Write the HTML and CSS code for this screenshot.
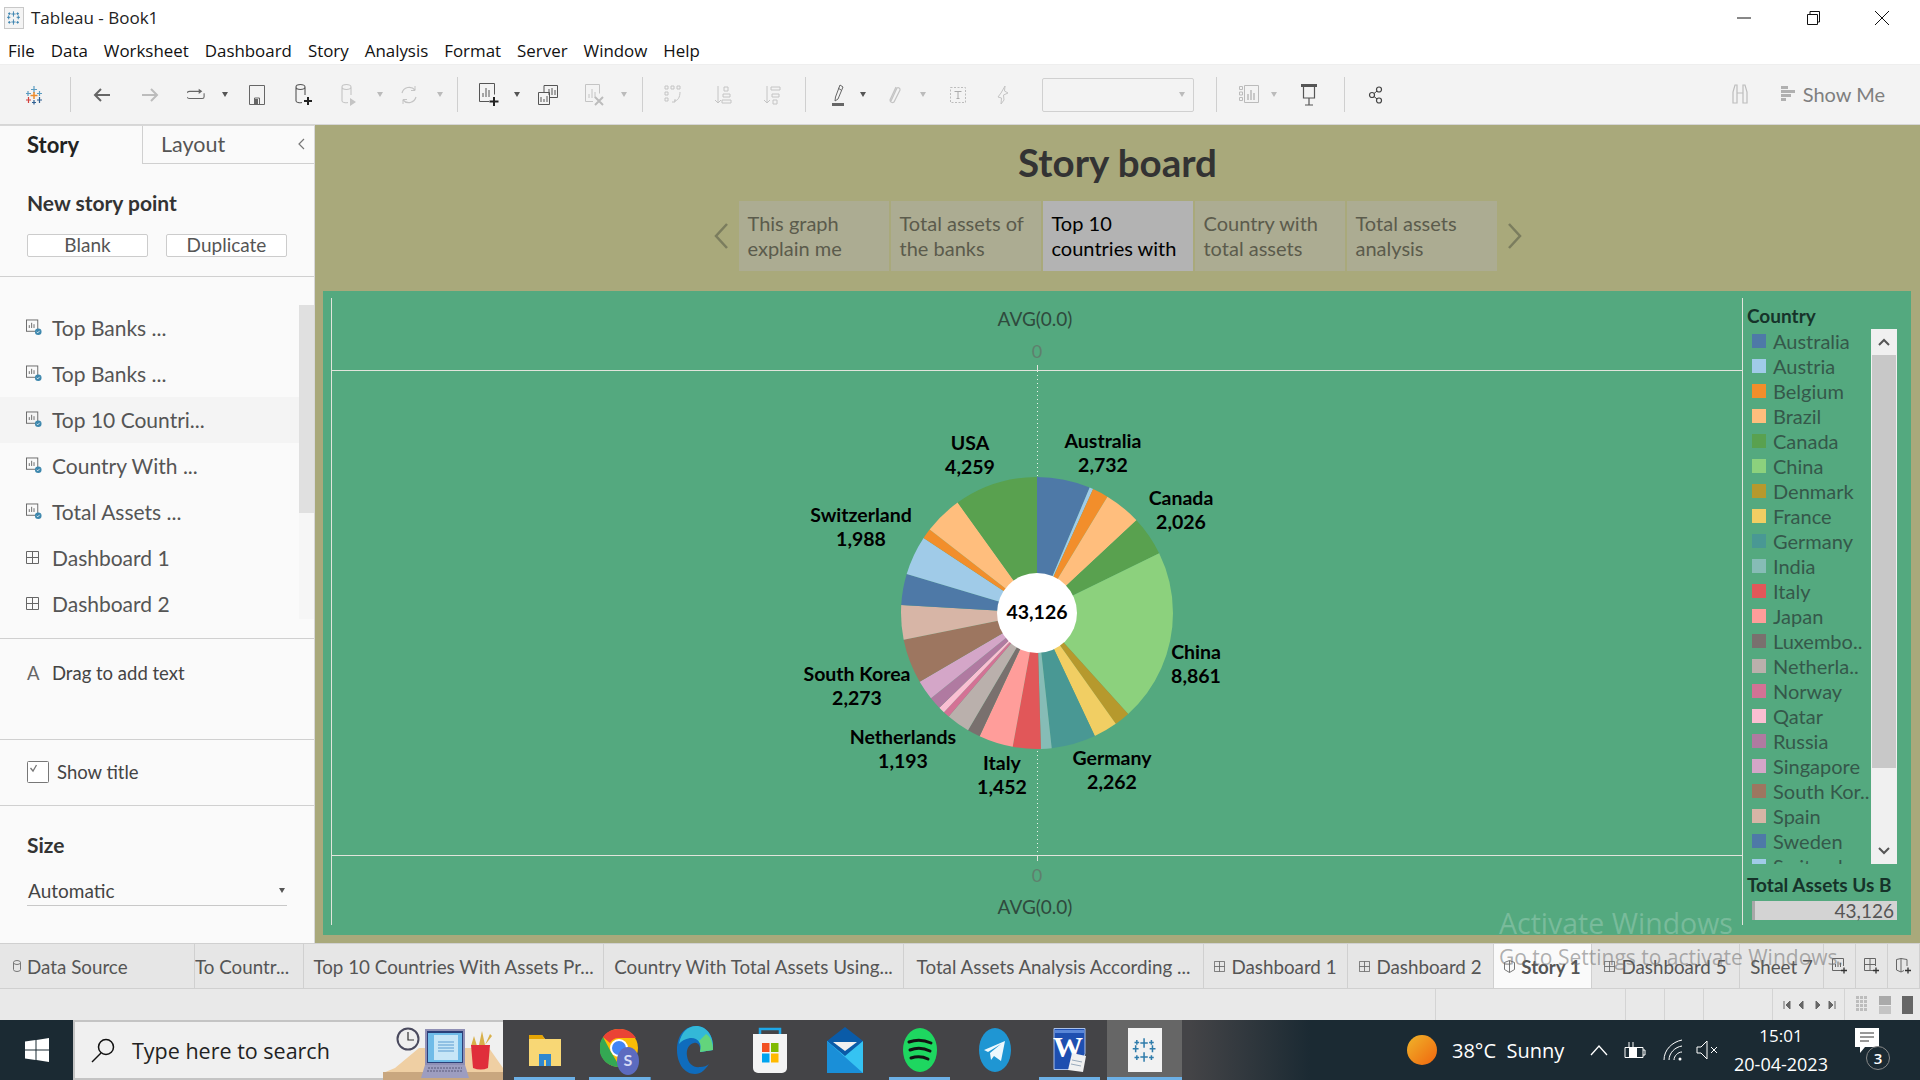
FILE: index.html
```html
<!DOCTYPE html>
<html lang="en">
<head>
<meta charset="utf-8">
<title>Tableau - Book1</title>
<link rel="stylesheet" href="styles.css">
</head>
<body>
<svg class="defs" width="0" height="0">
  <defs>
    <symbol id="logo" viewBox="0 0 24 24">
      <path d="M11.2 2v8M8 6h6.400M11.200 14v8M8 18h6.400M4 8v6M1.500 11h5M18.400 8v6M16 11h5M5 3.500v4M3 5.500h4M17.500 3.500v4M15.500 5.500h4M5 16.500v4M3 18.500h4M17.500 16.500v4M15.500 18.500h4" fill="none" stroke="currentColor" stroke-width="1.300"/>
    </symbol>
    <symbol id="sheet" viewBox="0 0 17 17">
      <rect x=".5" y=".5" width="12" height="12" fill="none" stroke="#666"/>
      <path d="M3.500 9V6M6 9V3.500M8.500 9V5" stroke="#666"/>
      <circle cx="13" cy="13" r="3.500" fill="#3d87ad"/>
      <path d="M11.300 13l1.200 1.200 2-2.200" fill="none" stroke="#fff" stroke-width=".8"/>
    </symbol>
    <symbol id="grid" viewBox="0 0 13 13">
      <path d="M.5.500h12v12H.5zM6.500.500v12M.5 6.500h12" fill="none" stroke="#666"/>
    </symbol>
  </defs>
</svg>
<div class="window">
  <header class="titlebar">
    <svg class="app-icon" width="20" height="22" viewBox="0 0 20 22"><rect x=".5" y=".5" width="19" height="21" fill="#f4f4f4" stroke="#c8c8c8"/><use href="#logo" x="2" y="3" width="16" height="16" class="blue-ink"/></svg>
    <span class="app-title">Tableau - Book1</span>
    <div class="winctl">
      <svg width="16" height="16" viewBox="0 0 16 16"><path d="M1 8h14" stroke="#111"/></svg>
      <svg width="16" height="16" viewBox="0 0 16 16"><path d="M2.500 4.500h10v10h-10zM5 4V1.500h9.500V12H13" fill="none" stroke="#111"/></svg>
      <svg width="16" height="16" viewBox="0 0 16 16"><path d="M1 1l14 14M15 1L1 15" stroke="#111"/></svg>
    </div>
  </header>
  <nav class="menubar">
    <span>File</span><span>Data</span><span>Worksheet</span><span>Dashboard</span><span>Story</span><span>Analysis</span><span>Format</span><span>Server</span><span>Window</span><span>Help</span>
  </nav>
  <div class="toolbar">
    <div class="tools">
      <div class="tool"><svg width="20" height="20" viewBox="0 0 20 20"><path d="M10 1v7M7 4.500h6M4 6v5M2 8.500h5" fill="none" stroke="#5a9bc0" stroke-width="1.200"/><path d="M10 7v7M6.500 10.500h7" stroke="#ec8a2c" stroke-width="1.500"/><path d="M15.500 6v5M13 8.500h5" stroke="#5a9bc0" stroke-width="1.200"/><path d="M4.500 12v6M2 15h5" stroke="#d2403c" stroke-width="1.200"/><path d="M15.500 12v6M13 15h5M10 15v4.500M8 17.500h4" stroke="#2e5f92" stroke-width="1.200"/></svg></div>
      <div class="tool"><span class="sep"></span></div>
      <div class="tool"><svg width="18" height="16" viewBox="0 0 18 16"><path d="M17 8H2M8 2L2 8l6 6" fill="none" stroke="#666" stroke-width="2"/></svg></div>
      <div class="tool"><svg width="18" height="16" viewBox="0 0 18 16"><path d="M1 8h15M10 2l6 6-6 6" fill="none" stroke="#bcbcbc" stroke-width="2"/></svg></div>
      <div class="tool"><svg width="18" height="13" viewBox="0 0 20 14"><path d="M15 3.500H3a2.500 2.500 0 0 0 0 8h14a2 2 0 0 0 2-2v-4" fill="none" stroke="#666" stroke-width="1.200"/><path d="M13 .5l4 3-4 3z" fill="#666"/></svg></div>
      <div class="tool"><i class="caret"></i></div>
      <div class="tool"><svg width="16" height="20" viewBox="0 0 16 20"><path d="M.5.500h15v19H.5zM5.500 19v-6h5v6" fill="none" stroke="#666"/><rect x="5" y="14" width="4" height="5" fill="#666"/></svg></div>
      <div class="tool"><svg width="18" height="24" viewBox="0 0 18 24"><path d="M1 4v14a4 2 0 0 0 6 1.500M1 4a4.500 2.500 0 0 1 9 0v8M1 4a4.500 2.500 0 0 0 9 0" fill="none" stroke="#555" stroke-width="1.100"/><path d="M13 14v8M9 18h8" stroke="#222" stroke-width="2"/></svg></div>
      <div class="tool"><svg width="18" height="24" viewBox="0 0 18 24"><path d="M1 4v14a4 2 0 0 0 6 1.500M1 4a4.500 2.500 0 0 1 9 0v8M1 4a4.500 2.500 0 0 0 9 0" fill="none" stroke="#c4c4c4" stroke-width="1.100"/><path d="M9 15l6 4-6 4z" fill="#c4c4c4"/></svg></div>
      <div class="tool"><i class="caret off"></i></div>
      <div class="tool"><svg width="18" height="20" viewBox="0 0 18 20"><path d="M2 8a7.500 7.500 0 0 1 13-3M16 12a7.500 7.500 0 0 1-13 3" fill="none" stroke="#c4c4c4" stroke-width="1.200"/><path d="M15 1v4.500h-4M3 19v-4.500h4" fill="none" stroke="#c4c4c4"/></svg></div>
      <div class="tool"><i class="caret off"></i></div>
      <div class="tool"><span class="sep"></span></div>
      <div class="tool"><svg width="20" height="24" viewBox="0 0 20 24"><path d="M10 18.500H.5V.5h15v11" fill="none" stroke="#555"/><path d="M4 14v-4M7 14V5M10 14V7" stroke="#555"/><path d="M15 14v9M10.500 18.500h9" stroke="#222" stroke-width="2"/></svg></div>
      <div class="tool"><i class="caret"></i></div>
      <div class="tool"><svg width="20" height="20" viewBox="0 0 20 20"><path d="M.5 7.500h11v12H.5zM6 7V.5h13.500v12H12" fill="none" stroke="#555"/><path d="M3 17v-5M6 17v-3M9 17v-6M11 10V4M14 10V3M17 10V5" stroke="#555"/></svg></div>
      <div class="tool"><svg width="20" height="22" viewBox="0 0 20 22"><path d="M8 17.500H.5V.5h14v9" fill="none" stroke="#c4c4c4"/><path d="M4 14v-4M7 14V5M10 14V8" stroke="#c4c4c4"/><path d="M10 13l8 8M18 13l-8 8" stroke="#bcbcbc" stroke-width="2"/></svg></div>
      <div class="tool"><i class="caret off"></i></div>
      <div class="tool"><span class="sep"></span></div>
      <div class="tool"><svg width="18" height="20" viewBox="0 0 18 20"><path d="M1 1h3v3H1zM7 1h3v3H7zM13 1h3v3h-3zM1 7h3v3H1zM1 13h3v3H1zM8 17h3v-3M16 7c0 5-2 9-6 9" fill="none" stroke="#c4c4c4"/></svg></div>
      <div class="tool"><svg width="18" height="20" viewBox="0 0 18 20"><path d="M4 1v17M1 15l3 3 3-3" fill="none" stroke="#c4c4c4"/><path d="M10 2h4v4h-4zM9 9h7v3H9zM8 15h9v3H8z" fill="none" stroke="#c4c4c4"/></svg></div>
      <div class="tool"><svg width="18" height="20" viewBox="0 0 18 20"><path d="M4 1v17M1 15l3 3 3-3" fill="none" stroke="#c4c4c4"/><path d="M8 2h9v3H8zM9 9h7v3H9zM10 15h4v4h-4z" fill="none" stroke="#c4c4c4"/></svg></div>
      <div class="tool"><span class="sep"></span></div>
      <div class="tool"><svg width="12" height="22" viewBox="0 0 12 22"><path d="M8 1l3 2-5 12-3 2 .5-4zM6 4l3 2" fill="none" stroke="#666"/><rect y="19" width="12" height="3" fill="#666"/></svg></div>
      <div class="tool"><i class="caret"></i></div>
      <div class="tool"><svg width="14" height="20" viewBox="0 0 14 20"><path d="M3 16L9 3a2 2 0 0 1 3 2L6 17a2.500 2.500 0 0 1-4-2L8 2" fill="none" stroke="#c4c4c4" stroke-width="1.200"/></svg></div>
      <div class="tool"><i class="caret off"></i></div>
      <div class="tool"><svg width="16" height="16" viewBox="0 0 16 16"><rect x=".5" y=".5" width="15" height="15" fill="none" stroke="#bcbcbc" stroke-dasharray="2 1.500"/><path d="M4.500 4.500h7M8 4.500v7M6.500 11.500h3" fill="none" stroke="#aaa"/></svg></div>
      <div class="tool"><svg width="12" height="20" viewBox="0 0 12 20"><path d="M8 1l-.5 5L11 8 6.500 10 7 15l-3 4 .5-6L1 12l3-4z" fill="none" stroke="#c4c4c4"/></svg></div>
      <div class="tool"><div class="combo"><i class="caret off"></i></div></div>
      <div class="tool"><span class="sep"></span></div>
      <div class="tool"><svg width="20" height="20" viewBox="0 0 20 20"><path d="M.5 1.500h3v3h-3zM.5 7h3v3h-3zM.5 12.500h3v3h-3zM5.500.5h14v17h-14z" fill="none" stroke="#bbb"/><path d="M9 15V9M12 15V5M15 15V8" stroke="#bbb" stroke-width="1.500"/></svg></div>
      <div class="tool"><i class="caret off"></i></div>
      <div class="tool"><svg width="16" height="22" viewBox="0 0 16 22"><path d="M2.500 2h11v12h-11zM8 14v7M4 21h8" fill="none" stroke="#555" stroke-width="1.200"/><rect y="0" width="16" height="3" fill="#555"/></svg></div>
      <div class="tool"><span class="sep"></span></div>
      <div class="tool"><svg width="16" height="18" viewBox="0 0 16 18"><circle cx="11" cy="3.500" r="2.500" fill="none" stroke="#444" stroke-width="1.200"/><circle cx="4" cy="9" r="2.500" fill="none" stroke="#444" stroke-width="1.200"/><circle cx="11" cy="14.500" r="2.500" fill="none" stroke="#444" stroke-width="1.200"/><path d="M6 7.500l3-2.400M6 10.500l3 2.400" stroke="#444"/></svg></div>
    </div>
    <div class="showme">
      <svg width="18" height="20" viewBox="0 0 18 20"><path d="M2 19V8l2-7h2v18zM16 19V8l-2-7h-2v18zM6 9h6" fill="none" stroke="#bdbdbd" stroke-width="1.200"/></svg>
      <svg class="showme-icon" width="14" height="15" viewBox="0 0 14 15"><path d="M0 0h7v3H0zM0 4h14v3H0zM0 8h10v3H0zM0 12h5v3H0z" fill="#b0b0b0"/></svg>
      <span>Show Me</span>
    </div>
  </div>

  <main class="main">
    <aside class="sidebar">
      <div class="side-tabs">
        <div class="side-tab active">Story</div>
        <div class="side-tab">Layout<svg class="collapse" width="7" height="12" viewBox="0 0 7 12"><path d="M6 1L1 6l5 5" fill="none" stroke="#777" stroke-width="1.200"/></svg></div>
      </div>
      <section class="new-point">
        <h2 class="side-h">New story point</h2>
        <div class="btns"><button class="btn">Blank</button><button class="btn">Duplicate</button></div>
      </section>
      <section class="sheets">
        <ul class="sheet-list">
          <li><svg width="16" height="17"><use href="#sheet"/></svg>Top Banks ...</li>
          <li><svg width="16" height="17"><use href="#sheet"/></svg>Top Banks ...</li>
          <li class="hi"><svg width="16" height="17"><use href="#sheet"/></svg>Top 10 Countri...</li>
          <li><svg width="16" height="17"><use href="#sheet"/></svg>Country With ...</li>
          <li><svg width="16" height="17"><use href="#sheet"/></svg>Total Assets ...</li>
          <li><svg width="16" height="13"><use href="#grid" width="13" height="13"/></svg>Dashboard 1</li>
          <li><svg width="16" height="13"><use href="#grid" width="13" height="13"/></svg>Dashboard 2</li>
        </ul>
        <div class="side-scroll"><div class="side-thumb"></div></div>
      </section>
      <section class="dragtext"><span class="a-glyph">A</span><span>Drag to add text</span></section>
      <section class="showtitle">
        <svg width="22" height="22" viewBox="0 0 22 22"><rect x=".5" y=".5" width="21" height="21" rx="1" fill="#fff" stroke="#777"/><path d="M3.500 7l2.500 3 3.500-6" fill="none" stroke="#777" stroke-width="1.300"/></svg>
        <span>Show title</span>
      </section>
      <section class="size">
        <h2 class="side-h">Size</h2>
        <div class="select"><span>Automatic</span><i class="caret"></i></div>
      </section>
    </aside>

    <div class="story">
      <div class="story-title">Story board</div>
      <div class="points">
        <svg width="16" height="26" viewBox="0 0 16 26"><path d="M14 1L3 13l11 12" fill="none" stroke="#7b7d5e" stroke-width="2.500"/></svg>
        <div class="point-tabs">
          <div class="point">This graph<br>explain me</div>
          <div class="point">Total assets of<br>the banks</div>
          <div class="point current">Top 10<br>countries with</div>
          <div class="point">Country with<br>total assets</div>
          <div class="point">Total assets<br>analysis</div>
        </div>
        <svg width="16" height="26" viewBox="0 0 16 26"><path d="M2 1l11 12L2 25" fill="none" stroke="#7b7d5e" stroke-width="2.500"/></svg>
      </div>
      <div class="viz">
        <svg class="plot" width="1420" height="644" viewBox="0 0 1420 644">
          <path class="axis" d="M8.500 7v627M1419.500 7v627M9 79.500h1410M9 564.500h1410M714.500 74v5M714.500 565v5"/>
          <path class="dots" d="M714.500 80v484"/>
          <text class="axis-title" x="712" y="35">AVG(0.0)</text>
          <text class="axis-num" x="714" y="67">0</text>
          <text class="axis-num" x="714" y="591">0</text>
          <text class="axis-title" x="712" y="623">AVG(0.0)</text>
          <g transform="translate(0 1)">
            <g class="pie" transform="rotate(-90 714 321)">
              <circle class="blue" cx="714" cy="321" r="68" pathLength="360" stroke-dasharray="22.8 360" stroke-dashoffset="0"/>
              <circle class="sky" cx="714" cy="321" r="68" pathLength="360" stroke-dasharray="1.600 360" stroke-dashoffset="-22.8"/>
              <circle class="orange" cx="714" cy="321" r="68" pathLength="360" stroke-dasharray="6.800 360" stroke-dashoffset="-24.4"/>
              <circle class="peach" cx="714" cy="321" r="68" pathLength="360" stroke-dasharray="15.800 360" stroke-dashoffset="-31.2"/>
              <circle class="green" cx="714" cy="321" r="68" pathLength="360" stroke-dasharray="16.900 360" stroke-dashoffset="-47"/>
              <circle class="lime" cx="714" cy="321" r="68" pathLength="360" stroke-dasharray="74 360" stroke-dashoffset="-63.9"/>
              <circle class="olive" cx="714" cy="321" r="68" pathLength="360" stroke-dasharray="6.700 360" stroke-dashoffset="-137.9"/>
              <circle class="yellow" cx="714" cy="321" r="68" pathLength="360" stroke-dasharray="10.200 360" stroke-dashoffset="-144.6"/>
              <circle class="teal" cx="714" cy="321" r="68" pathLength="360" stroke-dasharray="18.900 360" stroke-dashoffset="-154.8"/>
              <circle class="mint" cx="714" cy="321" r="68" pathLength="360" stroke-dasharray="4.600 360" stroke-dashoffset="-173.7"/>
              <circle class="red" cx="714" cy="321" r="68" pathLength="360" stroke-dasharray="12 360" stroke-dashoffset="-178.3"/>
              <circle class="salmon" cx="714" cy="321" r="68" pathLength="360" stroke-dasharray="14.700 360" stroke-dashoffset="-190.3"/>
              <circle class="grey" cx="714" cy="321" r="68" pathLength="360" stroke-dasharray="5.500 360" stroke-dashoffset="-205"/>
              <circle class="stone" cx="714" cy="321" r="68" pathLength="360" stroke-dasharray="10 360" stroke-dashoffset="-210.5"/>
              <circle class="rose" cx="714" cy="321" r="68" pathLength="360" stroke-dasharray="2.700 360" stroke-dashoffset="-220.5"/>
              <circle class="pink" cx="714" cy="321" r="68" pathLength="360" stroke-dasharray="2.700 360" stroke-dashoffset="-223.2"/>
              <circle class="mauve" cx="714" cy="321" r="68" pathLength="360" stroke-dasharray="5.300 360" stroke-dashoffset="-225.9"/>
              <circle class="lilac" cx="714" cy="321" r="68" pathLength="360" stroke-dasharray="8.400 360" stroke-dashoffset="-231.2"/>
              <circle class="brown" cx="714" cy="321" r="68" pathLength="360" stroke-dasharray="19 360" stroke-dashoffset="-239.6"/>
              <circle class="tan" cx="714" cy="321" r="68" pathLength="360" stroke-dasharray="14.900 360" stroke-dashoffset="-258.6"/>
              <circle class="blue" cx="714" cy="321" r="68" pathLength="360" stroke-dasharray="13.200 360" stroke-dashoffset="-273.5"/>
              <circle class="sky" cx="714" cy="321" r="68" pathLength="360" stroke-dasharray="16.800 360" stroke-dashoffset="-286.7"/>
              <circle class="orange" cx="714" cy="321" r="68" pathLength="360" stroke-dasharray="4.400 360" stroke-dashoffset="-303.5"/>
              <circle class="peach" cx="714" cy="321" r="68" pathLength="360" stroke-dasharray="16.400 360" stroke-dashoffset="-307.9"/>
              <circle class="green" cx="714" cy="321" r="68" pathLength="360" stroke-dasharray="35.700 360" stroke-dashoffset="-324.3"/>
            </g>
            <circle class="hole" cx="714" cy="321" r="40"/>
            <text class="lbl" x="714" y="327">43,126</text>
            <text class="lbl" x="647" y="158">USA</text><text class="lbl" x="647" y="182">4,259</text>
            <text class="lbl" x="780" y="156">Australia</text><text class="lbl" x="780" y="180">2,732</text>
            <text class="lbl" x="858" y="213">Canada</text><text class="lbl" x="858" y="237">2,026</text>
            <text class="lbl" x="873" y="367">China</text><text class="lbl" x="873" y="391">8,861</text>
            <text class="lbl" x="789" y="473">Germany</text><text class="lbl" x="789" y="497">2,262</text>
            <text class="lbl" x="679" y="478">Italy</text><text class="lbl" x="679" y="502">1,452</text>
            <text class="lbl" x="580" y="452">Netherlands</text><text class="lbl" x="580" y="476">1,193</text>
            <text class="lbl" x="534" y="389">South Korea</text><text class="lbl" x="534" y="413">2,273</text>
            <text class="lbl" x="538" y="230">Switzerland</text><text class="lbl" x="538" y="254">1,988</text>
          </g>
        </svg>
        <div class="legend">
          <div class="legend-title">Country</div>
          <div class="legend-body">
            <ul class="legend-list">
              <li><i class="blue"></i>Australia</li>
              <li><i class="sky"></i>Austria</li>
              <li><i class="orange"></i>Belgium</li>
              <li><i class="peach"></i>Brazil</li>
              <li><i class="green"></i>Canada</li>
              <li><i class="lime"></i>China</li>
              <li><i class="olive"></i>Denmark</li>
              <li><i class="yellow"></i>France</li>
              <li><i class="teal"></i>Germany</li>
              <li><i class="mint"></i>India</li>
              <li><i class="red"></i>Italy</li>
              <li><i class="salmon"></i>Japan</li>
              <li><i class="grey"></i>Luxembo..</li>
              <li><i class="stone"></i>Netherla..</li>
              <li><i class="rose"></i>Norway</li>
              <li><i class="pink"></i>Qatar</li>
              <li><i class="mauve"></i>Russia</li>
              <li><i class="lilac"></i>Singapore</li>
              <li><i class="brown"></i>South Kor..</li>
              <li><i class="tan"></i>Spain</li>
              <li><i class="blue"></i>Sweden</li>
              <li><i class="sky"></i>Switzerland</li>
            </ul>
            <div class="legend-scroll">
              <svg width="14" height="10" viewBox="0 0 14 10"><path d="M2 8l5-5 5 5" fill="none" stroke="#555" stroke-width="2"/></svg>
              <div class="legend-thumb"></div>
              <svg width="14" height="10" viewBox="0 0 14 10"><path d="M2 2l5 5 5-5" fill="none" stroke="#555" stroke-width="2"/></svg>
            </div>
          </div>
          <div class="legend-title total">Total Assets Us B</div>
          <div class="total-bar"><span>43,126</span></div>
        </div>
      </div>
    </div>
  </main>

  <div class="tabs">
    <div class="tab"><svg width="8" height="12" viewBox="0 0 8 12"><path d="M.5 2.500a3.500 2 0 0 1 7 0v7a3.500 2 0 0 1-7 0zM.5 2.500a3.500 2 0 0 0 7 0" fill="none" stroke="#777"/></svg>Data Source</div>
    <div class="tab clip">To Countr...</div>
    <div class="tab">Top 10 Countries With Assets Pr...</div>
    <div class="tab">Country With Total Assets Using...</div>
    <div class="tab">Total Assets Analysis According ...</div>
    <div class="tab"><svg width="11" height="11"><use href="#grid" width="11" height="11"/></svg>Dashboard 1</div>
    <div class="tab"><svg width="11" height="11"><use href="#grid" width="11" height="11"/></svg>Dashboard 2</div>
    <div class="tab on"><svg width="11" height="13" viewBox="0 0 11 13"><path d="M.5 2.500l5-2 5 2v7l-5 3-5-3zM5.500.5v12" fill="none" stroke="#777"/></svg>Story 1</div>
    <div class="tab"><svg width="11" height="11"><use href="#grid" width="11" height="11"/></svg>Dashboard 5</div>
    <div class="tab">Sheet 7</div>
    <div class="tab"><svg width="16" height="16" viewBox="0 0 16 16"><path d="M9 12.500H.5V.5h11V8M3.500 9V6M6 9V3.500M8.500 9V5" fill="none" stroke="#666"/><path d="M12 9.500v6M9 12.500h6" stroke="#333" stroke-width="1.300"/></svg></div>
    <div class="tab"><svg width="16" height="16" viewBox="0 0 16 16"><path d="M9 12.500H.5V.5h11V8M.5 6.500h11M6 .5v12" fill="none" stroke="#666"/><path d="M12 9.500v6M9 12.500h6" stroke="#333" stroke-width="1.300"/></svg></div>
    <div class="tab"><svg width="16" height="16" viewBox="0 0 16 16"><path d="M8 12.500l-3 1.500-4.500-2V1.500L5 .5l6 1V8M5 .5V14" fill="none" stroke="#666"/><path d="M12 9.500v6M9 12.500h6" stroke="#333" stroke-width="1.300"/></svg></div>
  </div>

  <div class="status">
    <div class="cell"></div>
    <div class="cell"></div>
    <div class="cell"></div>
    <div class="cell"></div>
    <div class="cell"></div>
    <div class="cell nav step">
      <svg width="60" height="10" viewBox="0 0 60 10"><path d="M1 1v8M7 1L3 5l4 4zM20 1l-4 4 4 4zM33 1l4 4-4 4zM46 1l4 4-4 4zM52 1v8" fill="#666" stroke="#666"/></svg>
    </div>
    <div class="cell nav view">
      <svg width="60" height="20" viewBox="0 0 60 20"><path d="M1 1h11v18H1z" fill="none"/><path d="M1 1h3v3H1zM5 1h3v3H5zM9 1h3v3H9zM1 5h3v3H1zM5 5h3v3H5zM9 5h3v3H9zM1 9h3v3H1zM5 9h3v3H5zM9 9h3v3H9zM1 13h3v3H1zM5 13h3v3H5zM9 13h3v3H9z" fill="#bdbdbd"/><path d="M24 1h12v9H24z" fill="#aaa"/><path d="M24 11h12v8H24z" fill="#c4c4c4"/><rect x="47" y="1" width="11" height="18" fill="#666"/></svg>
    </div>
  </div>

  <footer class="taskbar">
    <div class="start"><svg width="24" height="24" viewBox="0 0 24 24"><path d="M0 3.500l10.500-1.500v9.500H0zM11.500 2L24 0v11.500H11.500zM0 12.500h10.500V22L0 20.500zM11.500 12.500H24V24l-12.500-2z" fill="#fff"/></svg></div>
    <div class="search">
      <svg width="26" height="26" viewBox="0 0 26 26"><circle cx="16" cy="10" r="7.500" fill="none" stroke="#111" stroke-width="1.500"/><path d="M11 16L2 25" stroke="#111" stroke-width="1.500"/></svg>
      <span class="search-text">Type here to search</span>
      <svg class="desk" width="120" height="60" viewBox="0 0 120 60">
        <path d="M12 48l24-20h70l14 20v12H0V53z" fill="#efcfa3"/><path d="M0 52h120v8H0z" fill="#c9a77f"/>
        <circle cx="25" cy="19" r="10.500" fill="#eee" stroke="#4a4a5e" stroke-width="2"/><path d="M25 12v8h6" fill="none" stroke="#333" stroke-width="1.200"/>
        <path d="M42 9h40v36H42z" fill="#8f8fb5"/><rect x="44" y="11" width="36" height="32" fill="#2b3f78"/><rect x="45" y="13" width="34" height="29" fill="#6fbbe8"/><rect x="51" y="15" width="24" height="25" fill="#c7e6f7"/><path d="M55 22h16M55 25h16M55 28h16M55 31h16" stroke="#5a9bd0"/>
        <path d="M42 45h40l4 13H38z" fill="#9d9dc0"/><path d="M45 48h34M44 51h36" stroke="#5b5b7a" stroke-dasharray="2 1"/>
        <path d="M88 26l3-10 3 10zM96 25l3-14 3 14zM102 25l5-11 2 2z" fill="#d8b04a"/><path d="M88 25h19l-2 23q-7 3-15 0z" fill="#e02e3b"/>
      </svg>
    </div>
    <div class="apps">
      <div class="app run">
        <svg width="34" height="36" viewBox="0 0 34 36"><path d="M1 3h13l3 4h16v27H1z" fill="#f8d775"/><path d="M1 3h13l3 4H1z" fill="#e5a505"/><path d="M11 34V22h12v12h-5v-6h-2v6z" fill="#2f88d0"/></svg>
      </div>
      <div class="app run two">
        <svg width="40" height="52" viewBox="0 0 40 52"><circle cx="19" cy="24" r="19" fill="#fbbc05"/><path d="M19 5A19 19 0 0 1 36 14H19a10 10 0 0 0-9 5L3 13A19 19 0 0 1 19 5z" fill="#ea4335"/><path d="M3 13l8 15 9 15A19 19 0 0 1 3 13z" fill="#34a853"/><circle cx="19" cy="24" r="9" fill="#fff"/><circle cx="19" cy="24" r="7" fill="#4285f4"/><ellipse cx="28" cy="37" rx="11" ry="14" fill="#5c6bc0"/><text class="s-mark" x="28" y="42">S</text></svg>
      </div>
      <div class="app">
        <svg width="38" height="48" viewBox="0 0 38 48"><path d="M1 24C1 9 9 0 20 0c11 0 18 10 17 24l-13 2c1-6-2-10-6-9-5 1-8 6-7 13 1 8 7 12 13 11 4 0 7-1 9-3-4 6-8 10-14 10C8 48 1 37 1 24z" fill="#0f6cbd"/><path d="M3 18C5 6 12 0 20 0c11 0 18 10 17 24l-13 2c3-9-3-15-10-14-5 1-9 3-11 6z" fill="#33b8d8"/><path d="M30 8c5 3 7 9 7 16l-13 2c1-5 1-8-1-11z" fill="#63d47c"/></svg>
      </div>
      <div class="app">
        <svg width="36" height="46" viewBox="0 0 36 46"><path d="M8 8V2h20v6" fill="none" stroke="#1ea7e8" stroke-width="2.500"/><path d="M1 7h34v34a5 5 0 0 1-5 5H6a5 5 0 0 1-5-5z" fill="#f4f4f4"/><rect x="10" y="16" width="7.500" height="9" fill="#f25022"/><rect x="19" y="16" width="7.500" height="9" fill="#7fba00"/><rect x="10" y="26.500" width="7.500" height="9" fill="#00a4ef"/><rect x="19" y="26.500" width="7.500" height="9" fill="#ffb900"/></svg>
      </div>
      <div class="app">
        <svg width="36" height="46" viewBox="0 0 36 46"><path d="M0 14L18 0l18 14v32H0z" fill="#0a5ba8"/><path d="M6 15h24l-12 9z" fill="#f0f0f0"/><path d="M0 14l18 15 18-15v32H0z" fill="#35c3f2"/><path d="M0 14v32h36z" fill="#1a8fd8"/></svg>
      </div>
      <div class="app run">
        <svg width="34" height="44" viewBox="0 0 34 44"><ellipse cx="17" cy="22" rx="17" ry="22" fill="#1ed760"/><path d="M6 14q11-4 22 1M7 22q10-4 20 1M8 30q9-3 17 1" fill="none" stroke="#121212" stroke-width="3" stroke-linecap="round"/></svg>
      </div>
      <div class="app">
        <svg width="32" height="44" viewBox="0 0 32 44"><ellipse cx="16" cy="22" rx="16" ry="22" fill="#1f96d3"/><path d="M5 22l21-9-4 20-7-5-3 4-1-7 11-9-13 8z" fill="#eef8fd"/></svg>
      </div>
      <div class="app run">
        <svg width="34" height="44" viewBox="0 0 34 44"><path d="M1 .5h31v25l-5 16H1z" fill="#1e4fb0" stroke="#a8c0ea"/><path d="M2 2h29v3H2z" fill="#5a87d8"/><text class="w-mark" x="15" y="29">W</text><path d="M15 42l4-17 14 3-3 16z" fill="#f0f0f0"/><path d="M19 32l10 2M18 36l10 2" stroke="#9ab"/></svg>
      </div>
      <div class="app run full">
        <svg width="34" height="44" viewBox="0 0 34 44"><rect width="34" height="44" fill="#f2f2f2"/><use href="#logo" x="3" y="7" width="28" height="30" class="blue-ink"/></svg>
      </div>
    </div>
    <div class="tray">
      <i class="sun"></i>
      <span class="weather">38°C&nbsp; Sunny</span>
      <svg class="t-caret" width="18" height="12" viewBox="0 0 18 12"><path d="M1 11l8-9 8 9" fill="none" stroke="#fff" stroke-width="1.300"/></svg>
      <svg class="t-batt" width="22" height="18" viewBox="0 0 22 18"><path d="M1 6.500h18v10H1zM19 9h2v5h-2M5 6V1M9 6V1" fill="none" stroke="#fff"/><path d="M5 7h8v9H5z" fill="#fff"/></svg>
      <svg class="t-wifi" width="20" height="22" viewBox="0 0 20 22"><path d="M1 21C1 11 9 3 19 1M6 21c0-7 6-13 13-14M11 21c0-4 4-8 8-8" fill="none" stroke="#fff"/><circle cx="17" cy="20" r="1.500" fill="#fff"/></svg>
      <svg class="t-spk" width="22" height="22" viewBox="0 0 22 22"><path d="M1 8h4l6-6v18l-6-6H1zM15 8l6 6M21 8l-6 6" fill="none" stroke="#fff"/></svg>
      <div class="clock"><span class="time">15:01</span><span class="date">20-04-2023</span></div>
      <div class="notif">
        <svg width="24" height="30" viewBox="0 0 24 30"><path d="M0 0h24v19H10l-5 6v-6H0z" fill="#fff"/><path d="M5 5h14M5 9h14M5 13h9" stroke="#333"/></svg>
        <span class="badge">3</span>
      </div>
    </div>
  </footer>

  <div class="watermark">
    <span class="wm-1">Activate Windows</span>
    <span class="wm-2">Go to Settings to activate Windows.</span>
  </div>
</div>
</body>
</html>
```

FILE: styles.css
```css
* { box-sizing: border-box; }
html, body { margin: 0; padding: 0; height: 100%; overflow: hidden; }
body { font-family: "Lato", "Liberation Sans", sans-serif; color: #444; background: #fff; }
.defs { position: absolute; }
.window { position: relative; width: 1920px; height: 1080px; display: flex; flex-direction: column; }
.blue-ink { color: #2f7cab; }

.titlebar { height: 37px; flex: none; display: flex; align-items: center; padding: 0 0 2px 4px; font-family: "Open Sans", sans-serif; font-size: 17px; color: #222; }
.app-icon { margin-right: 7px; }
.winctl { margin-left: auto; display: flex; gap: 53px; padding-right: 30px; }

.menubar { height: 27px; flex: none; display: flex; align-items: center; gap: 16px; padding-left: 8px; font-family: "Open Sans", sans-serif; font-size: 16.9px; color: #111; }

.toolbar { height: 61px; flex: none; display: flex; align-items: center; background: #f3f3f3; border-top: 1px solid #eee; border-bottom: 1px solid #d6d6d6; }
.tools { display: grid; padding-left: 34px; grid-template-columns: 36px 32px 48px 46px 29px 32px 47px 46px 30px 29px 31px 17px 32px 28px 31px 47px 29px 18px 31px 50px 49px 33px 33px 25px 32px 28px 35px 45px 115px 98px 33px 25px 35px 35px 32px 0; align-items: center; }
.tool { width: 0; display: flex; justify-content: center; align-items: center; }
.tool svg, .tool .sep, .tool .caret, .tool .combo { flex: none; }
.sep { display: block; width: 1px; height: 35px; background: #cfcfcf; }
.caret { display: block; width: 0; height: 0; border-left: 3.5px solid transparent; border-right: 3.5px solid transparent; border-top: 5px solid #555; }
.caret.off { border-top-color: #bbb; }
.combo { width: 152px; height: 34px; border: 1px solid #d0d0d0; border-radius: 2px; display: flex; align-items: center; justify-content: flex-end; padding-right: 8px; }
.showme { margin-left: auto; display: flex; align-items: center; padding: 0 35px 2px 0; font-size: 20px; color: #7f7f7f; }
.showme-icon { margin-left: 32px; margin-right: 8px; }

.main { flex: 1; display: flex; min-height: 0; }
.sidebar { width: 315px; flex: none; display: flex; flex-direction: column; background: #fafafa; border-right: 1px solid #d8d8d8; font-size: 18.5px; color: #444; }
.side-tabs { height: 39px; flex: none; display: flex; border-top: 1px solid #d8d8d8; }
.side-tab { display: flex; align-items: center; padding-bottom: 2px; }
.side-tab.active { width: 142px; padding-left: 27px; font-size: 22px; font-weight: 700; color: #222; }
.side-tab:not(.active) { flex: 1; padding-left: 18px; font-size: 21.5px; border-left: 1px solid #d0d0d0; border-bottom: 1px solid #d0d0d0; color: #555; position: relative; }
.collapse { margin-left: auto; margin-right: 9px; }
.side-h { margin: 0; font-size: 21px; font-weight: 700; line-height: 22px; color: #333; }
.new-point { height: 113px; flex: none; padding: 28px 0 0 27px; border-bottom: 1px solid #d0d0d0; }
.btns { display: flex; gap: 18px; margin-top: 20px; }
.btn { width: 121px; height: 23px; padding: 0 0 2px; font: 19px/19px "Lato", sans-serif; color: #555; background: #fff; border: 1px solid #ccc; border-radius: 2px; }
.sheets { height: 362px; flex: none; display: flex; padding-top: 28px; border-bottom: 1px solid #d0d0d0; }
.sheet-list { list-style: none; margin: 0; padding: 0; flex: 1; font-size: 21px; color: #555; }
.sheet-list li { height: 46px; display: flex; align-items: center; gap: 10px; padding: 0 0 2px 26px; white-space: nowrap; }
.sheet-list .hi { background: #f4f4f4; }
.side-scroll { width: 15px; height: 314px; background: #f6f6f6; }
.side-thumb { height: 208px; background: #e0e0e0; }
.dragtext { height: 101px; flex: none; display: flex; padding: 22px 0 0 27px; line-height: 24px; border-bottom: 1px solid #d0d0d0; }
.a-glyph { width: 25px; color: #666; }
.showtitle { height: 66px; flex: none; display: flex; align-items: center; gap: 8px; padding: 0 0 2px 27px; border-bottom: 1px solid #d0d0d0; }
.size { flex: 1; padding: 28px 0 0 27px; }
.select { width: 260px; margin-top: 23px; height: 27px; padding: 0 2px 3px 1px; font-size: 19px; display: flex; align-items: center; justify-content: space-between; border-bottom: 1px solid #c8c8c8; }

.story { flex: 1; min-width: 0; display: flex; flex-direction: column; background: #a9a97b; }
.story-title { height: 76px; flex: none; display: flex; align-items: center; justify-content: center; padding-bottom: 2px; font-size: 38.5px; font-weight: 700; color: #333; }
.points { height: 70px; flex: none; display: flex; align-items: center; justify-content: center; gap: 10px; }
.point-tabs { display: flex; gap: 2px; height: 70px; }
.point { width: 150px; height: 70px; padding: 10px 0 0 9px; font-size: 20px; line-height: 25px; background: #acac92; color: #5b5b4c; white-space: nowrap; }
.point.current { background: #b3b3b3; color: #000; }
.viz { flex: 1; min-height: 0; margin: 20px 9px 8px 8px; display: flex; background: #54a97f; }
.plot { flex: none; display: block; }
.axis { fill: none; stroke: #e2e4dc; stroke-width: 1; }
.dots { fill: none; stroke: #eef2ea; stroke-width: 1; stroke-dasharray: 1 3; }
.axis-title { font-size: 19px; fill: #2f4a3d; text-anchor: middle; }
.axis-num { font-size: 18px; fill: #5f7f6d; text-anchor: middle; }
.lbl { font-size: 19.5px; font-weight: 700; fill: #000; text-anchor: middle; }
.hole { fill: #fff; }
.pie circle { fill: none; stroke-width: 136; }

.legend { flex: 1; padding: 16px 14px 0 4px; min-width: 0; }
.legend-title { height: 20px; line-height: 18px; font-size: 19px; font-weight: 700; color: #16332a; white-space: nowrap; }
.legend-title.total { margin-top: 12px; }
.legend-body { height: 535px; margin-top: 2px; display: flex; }
.legend-list { list-style: none; margin: 0; padding: 0 0 0 5px; width: 124px; height: 535px; overflow: hidden; font-size: 20px; color: #35584a; }
.legend-list li { height: 25px; display: flex; align-items: center; gap: 7px; padding-bottom: 1px; white-space: nowrap; }
.legend-list i { width: 14px; height: 14px; flex: none; }
.legend-scroll { width: 26px; background: #f0f0f0; display: flex; flex-direction: column; align-items: center; }
.legend-scroll svg { flex: none; margin: 8px 0; }
.legend-scroll svg:first-child { margin-bottom: 0; }
.legend-thumb { width: 24px; height: 413px; margin: 8px 0 0; background: #c8c8c8; flex: none; }
.legend-scroll svg:last-child { margin-top: auto; }
.total-bar { height: 19px; margin: 5px 0 0 5px; background: linear-gradient(90deg, #a8a8a8 3px, #d3d3d3 3px); text-align: right; font-size: 19px; line-height: 19px; color: #555; padding-right: 3px; }

.blue { background: #4e79a7; stroke: #4e79a7; }
.pie .blue { stroke: #4e79a7; } .pie .sky { stroke: #a0cbe8; } .pie .orange { stroke: #f28e2b; } .pie .peach { stroke: #ffbe7d; } .pie .green { stroke: #59a14f; } .pie .lime { stroke: #8cd17d; } .pie .olive { stroke: #b6992d; } .pie .yellow { stroke: #f1ce63; } .pie .teal { stroke: #499894; } .pie .mint { stroke: #86bcb6; } .pie .red { stroke: #e15759; } .pie .salmon { stroke: #ff9d9a; } .pie .grey { stroke: #79706e; } .pie .stone { stroke: #bab0ac; } .pie .rose { stroke: #d37295; } .pie .pink { stroke: #fabfd2; } .pie .mauve { stroke: #b07aa1; } .pie .lilac { stroke: #d4a6c8; } .pie .brown { stroke: #9d7660; } .pie .tan { stroke: #d7b5a6; }
.sky { background: #a0cbe8; } .orange { background: #f28e2b; } .peach { background: #ffbe7d; } .green { background: #59a14f; } .lime { background: #8cd17d; } .olive { background: #b6992d; } .yellow { background: #f1ce63; } .teal { background: #499894; } .mint { background: #86bcb6; } .red { background: #e15759; } .salmon { background: #ff9d9a; } .grey { background: #79706e; } .stone { background: #bab0ac; } .rose { background: #d37295; } .pink { background: #fabfd2; } .mauve { background: #b07aa1; } .lilac { background: #d4a6c8; } .brown { background: #9d7660; } .tan { background: #d7b5a6; }

.tabs { height: 46px; flex: none; display: grid; grid-template-columns: 195px 109px 300px 300px 300px 144px 146px 98px 148px 84px 32px 32px 32px; background: #e6e6e6; border-top: 1px solid #d0d0d0; border-bottom: 1px solid #d0d0d0; font-size: 18.8px; color: #555; }
.tab { display: flex; align-items: center; justify-content: center; gap: 6px; border-right: 1px solid #d0d0d0; white-space: nowrap; overflow: hidden; }
.tab:first-child { justify-content: flex-start; padding-left: 13px; }
.tab.clip { justify-content: flex-start; }
.tab.on { background: #fafafa; font-weight: 700; color: #555; }
.status { height: 31px; flex: none; display: grid; grid-template-columns: 1436px 190px 39px 39px 69px 72px 75px; background: #e9e9e9; }
.cell { border-right: 1px solid #d4d4d4; }
.cell:last-child { border-right: 0; }
.cell.nav { display: flex; align-items: center; justify-content: center; }
.cell.step { padding-left: 8px; }
.cell.view { padding-left: 4px; }

.taskbar { height: 60px; flex: none; display: flex; background: linear-gradient(90deg, #444447 0, #444447 1190px, #1b2a33 1310px); color: #fff; }
.start { width: 73px; flex: none; background: #1b2a33; display: flex; align-items: center; justify-content: center; }
.search { width: 430px; flex: none; display: flex; align-items: center; position: relative; background: #f0f0f0; border: 2px solid #c4c4c4; border-right: 0; color: #222; font-family: "Open Sans", sans-serif; font-size: 21.5px; padding-left: 15px; }
.search-text { margin-left: 16px; white-space: nowrap; }
.desk { position: absolute; right: 0; bottom: -2px; }
.apps { display: flex; padding-left: 4px; flex: none; }
.app { width: 75px; height: 60px; display: flex; align-items: center; justify-content: center; position: relative; }
.app.run::after { content: ""; position: absolute; left: 7px; right: 7px; bottom: 0; height: 3px; background: #6cb0e6; }
.app.two::before { content: ""; position: absolute; left: 55px; width: 14px; bottom: 0; height: 3px; background: #4d89bb; }
.app.full { background: #666; }
.app.full::after { left: 0; right: 0; }
.s-mark { font-size: 16px; font-weight: 700; fill: #d6dbf5; text-anchor: middle; }
.w-mark { font-size: 30px; font-weight: 900; fill: #fff; text-anchor: middle; font-family: "Liberation Serif", serif; }
.tray { display: flex; align-items: center; flex: none; margin-left: 225px; }
.sun { width: 30px; height: 30px; border-radius: 50%; background: linear-gradient(135deg, #f0b52a, #f0650e); flex: none; }
.weather { margin-left: 15px; width: 118px; font-family: "Open Sans", sans-serif; font-size: 20px; white-space: nowrap; }
.t-caret { margin-left: 20px; }
.t-batt { margin-left: 16px; }
.t-wifi { margin-left: 17px; }
.t-spk { margin-left: 13px; }
.clock { width: 100px; margin-left: 13px; display: flex; flex-direction: column; align-items: center; gap: 6px; font-family: "Open Sans", sans-serif; line-height: 22px; }
.time { font-size: 17px; }
.date { font-size: 18px; }
.notif { position: relative; margin-left: 24px; width: 36px; height: 44px; }
.badge { position: absolute; left: 11px; top: 18px; width: 24px; height: 24px; border-radius: 50%; background: #1b2a33; border: 1px solid #888; display: flex; align-items: center; justify-content: center; font-family: "Open Sans", sans-serif; font-size: 15px; font-weight: 600; }

.watermark { position: absolute; left: 1499px; top: 905px; display: flex; flex-direction: column; font-family: "Open Sans", sans-serif; white-space: nowrap; pointer-events: none; }
.wm-1 { font-size: 28.5px; line-height: 36px; color: rgba(255, 255, 255, .22); }
.wm-2 { font-size: 21px; line-height: 28px; margin-top: 2px; color: rgba(110, 110, 110, .55); }
```
